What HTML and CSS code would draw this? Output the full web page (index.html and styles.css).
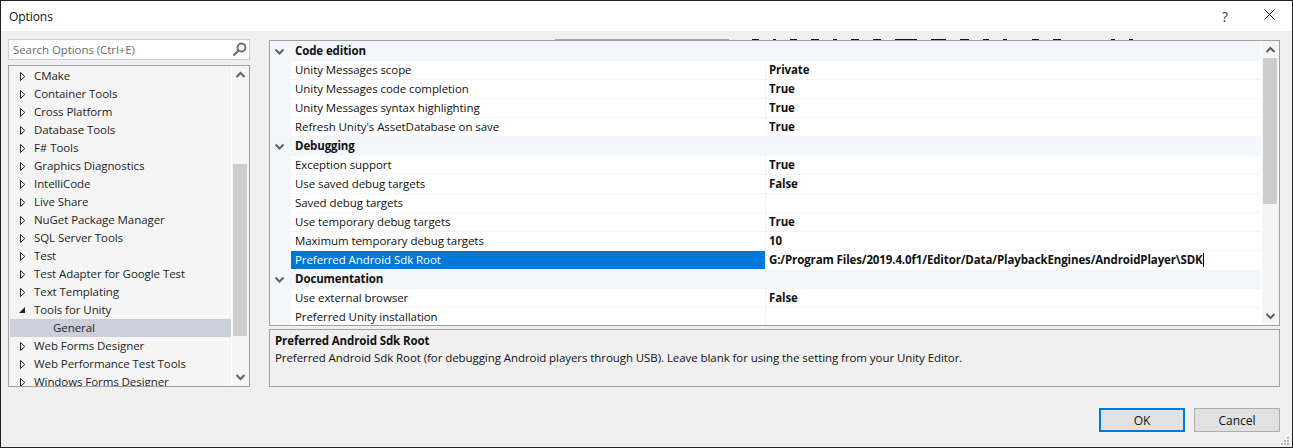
FILE: index.html
```html
<!DOCTYPE html>
<html lang="en">
<head>
<meta charset="utf-8">
<title>Options</title>
<link rel="stylesheet" href="styles.css">
</head>
<body>
<svg class="defs" width="0" height="0">
  <symbol id="closed" viewBox="0 0 6 9"><path d="M0.5 0.5V8.5L4.8 4.5Z" fill="#f5f5f5" stroke="#222"/></symbol>
  <symbol id="opened" viewBox="0 0 6 6"><path d="M6 0V6H0Z" fill="#222"/></symbol>
  <symbol id="up" viewBox="0 0 15 18"><path d="M3.5 11L7.5 7L11.5 11" fill="none" stroke="#606060" stroke-width="2"/></symbol>
  <symbol id="down" viewBox="0 0 15 18"><path d="M3.5 7L7.5 11L11.5 7" fill="none" stroke="#606060" stroke-width="2"/></symbol>
  <symbol id="chev" viewBox="0 0 21 19"><path d="M5.5 7.5L9.5 11.5L13.5 7.5" fill="none" stroke="#606060" stroke-width="2"/></symbol>
</svg>
<div class="window">
  <header class="titlebar">
    <span class="title">Options</span>
    <span class="help">?</span>
    <svg class="close" width="11" height="11" viewBox="0 0 11 11"><path d="M0.5 0.5L10.5 10.5M10.5 0.5L0.5 10.5" stroke="#111" fill="none"/></svg>
  </header>
  <main class="body">
    <div class="columns">
      <aside class="left">
        <div class="search">
          <span>Search Options (Ctrl+E)</span>
          <svg width="15" height="15" viewBox="0 0 15 15"><circle cx="9.5" cy="5.5" r="4" fill="none" stroke="#717171" stroke-width="2"/><path d="M6.5 8.5L1.5 13.5" stroke="#717171" stroke-width="2.4"/></svg>
        </div>
        <div class="tree">
          <div class="tree-list">
            <div class="node"><svg class="tri"><use href="#closed"/></svg>CMake</div>
            <div class="node"><svg class="tri"><use href="#closed"/></svg>Container Tools</div>
            <div class="node"><svg class="tri"><use href="#closed"/></svg>Cross Platform</div>
            <div class="node"><svg class="tri"><use href="#closed"/></svg>Database Tools</div>
            <div class="node"><svg class="tri"><use href="#closed"/></svg>F# Tools</div>
            <div class="node"><svg class="tri"><use href="#closed"/></svg>Graphics Diagnostics</div>
            <div class="node"><svg class="tri"><use href="#closed"/></svg>IntelliCode</div>
            <div class="node"><svg class="tri"><use href="#closed"/></svg>Live Share</div>
            <div class="node"><svg class="tri"><use href="#closed"/></svg>NuGet Package Manager</div>
            <div class="node"><svg class="tri"><use href="#closed"/></svg>SQL Server Tools</div>
            <div class="node"><svg class="tri"><use href="#closed"/></svg>Test</div>
            <div class="node"><svg class="tri"><use href="#closed"/></svg>Test Adapter for Google Test</div>
            <div class="node"><svg class="tri"><use href="#closed"/></svg>Text Templating</div>
            <div class="node"><svg class="tri-open"><use href="#opened"/></svg>Tools for Unity</div>
            <div class="node child">General</div>
            <div class="node"><svg class="tri"><use href="#closed"/></svg>Web Forms Designer</div>
            <div class="node"><svg class="tri"><use href="#closed"/></svg>Web Performance Test Tools</div>
            <div class="node"><svg class="tri"><use href="#closed"/></svg>Windows Forms Designer</div>
          </div>
          <div class="sbar tree-sbar">
            <svg class="arrow"><use href="#up"/></svg>
            <div class="thumb"></div>
            <svg class="arrow"><use href="#down"/></svg>
          </div>
        </div>
      </aside>
      <section class="right">
        <div class="grid">
          <div class="grid-list">
            <div class="group first"><svg class="chev"><use href="#chev"/></svg>Code edition</div>
            <div class="prop"><span class="name">Unity Messages scope</span><span class="val">Private</span></div>
            <div class="prop"><span class="name">Unity Messages code completion</span><span class="val">True</span></div>
            <div class="prop"><span class="name">Unity Messages syntax highlighting</span><span class="val">True</span></div>
            <div class="prop"><span class="name">Refresh Unity's AssetDatabase on save</span><span class="val">True</span></div>
            <div class="group"><svg class="chev"><use href="#chev"/></svg>Debugging</div>
            <div class="prop"><span class="name">Exception support</span><span class="val">True</span></div>
            <div class="prop"><span class="name">Use saved debug targets</span><span class="val">False</span></div>
            <div class="prop"><span class="name">Saved debug targets</span><span class="val"></span></div>
            <div class="prop"><span class="name">Use temporary debug targets</span><span class="val">True</span></div>
            <div class="prop"><span class="name">Maximum temporary debug targets</span><span class="val">10</span></div>
            <div class="prop selected"><span class="name">Preferred Android Sdk Root</span><span class="val"><span class="editing">G:/Program Files/2019.4.0f1/Editor/Data/PlaybackEngines/AndroidPlayer\SDK</span></span></div>
            <div class="group"><svg class="chev"><use href="#chev"/></svg>Documentation</div>
            <div class="prop"><span class="name">Use external browser</span><span class="val">False</span></div>
            <div class="prop"><span class="name">Preferred Unity installation</span><span class="val"></span></div>
          </div>
          <div class="sbar grid-sbar">
            <svg class="arrow"><use href="#up"/></svg>
            <div class="thumb"></div>
            <svg class="arrow"><use href="#down"/></svg>
          </div>
        </div>
        <div class="desc">
          <div class="desc-title">Preferred Android Sdk Root</div>
          <div>Preferred Android Sdk Root (for debugging Android players through USB). Leave blank for using the setting from your Unity Editor.</div>
        </div>
      </section>
    </div>
    <footer class="buttons">
      <button class="btn primary">OK</button>
      <button class="btn">Cancel</button>
    </footer>
  </main>
  <svg class="bleed" width="1293" height="1" viewBox="0 0 1293 1"><path d="M752 .5h7M773 .5h3M790 .5h7M811 .5h8M833 .5h4M851 .5h8M873 .5h8M895 .5h22M931 .5h15M960 .5h9M983 .5h6M1003 .5h4M1032 .5h7M1053 .5h8M1111 .5h4M1129 .5h4" stroke="#111" fill="none"/><path d="M555 .5h174" stroke="#a8a8a8" fill="none"/></svg>
  <svg class="grip" width="8" height="8" viewBox="0 0 8 8"><path d="M6 0h2v2H6zM3 3h2v2H3zM6 3h2v2H6zM0 6h2v2H0zM3 6h2v2H3zM6 6h2v2H6z" fill="#b8b8b8"/></svg>
</div>
</body>
</html>
```
FILE: styles.css
```css
* { box-sizing: border-box; }
html, body { margin: 0; height: 100%; overflow: hidden; }
body { font-family: "Open Sans", "Liberation Sans", sans-serif; font-size: 11.5px; letter-spacing: -0.07px; color: #1e1e1e; }
.defs { position: absolute; }
.window { position: relative; width: 1293px; height: 448px; display: flex; flex-direction: column; border: 1px solid #222; background: #f0f0f0; }
.titlebar { height: 30px; flex: none; background: #fff; display: flex; align-items: center; padding-left: 8px; }
.title { flex: 1; color: #111; font-size: 12px; }
.help { width: 14px; font-size: 14px; margin-right: 28px; color: #333; }
.close { margin-right: 17px; margin-top: -4px; }
.body { flex: 1; display: flex; flex-direction: column; padding: 8px 12px 0 7px; }
.columns { display: flex; gap: 19px; height: 348px; }
.left { width: 242px; flex: none; display: flex; flex-direction: column; gap: 5px; }
.search { height: 21px; flex: none; border: 1px solid #ccceDB; background: #fff; display: flex; align-items: center; justify-content: space-between; padding: 0 2px 0 4px; color: #6d6d6d; }
.tree { height: 322px; border: 1px solid #a0a0a0; background: #f5f5f5; display: flex; overflow: hidden; padding-left: 1px; }
.tree-list { flex: 1; padding-top: 1px; overflow: hidden; }
.node { height: 18px; line-height: 18px; display: flex; align-items: center; white-space: nowrap; padding-left: 24px; position: relative; }
.child { padding-left: 43px; background: #ccceDB; }
.tri { position: absolute; left: 10px; top: 5px; width: 6px; height: 9px; }
.tri-open { position: absolute; left: 9px; top: 6px; width: 6px; height: 6px; }
.sbar { width: 18px; flex: none; display: flex; flex-direction: column; justify-content: space-between; padding: 0 2px 0 1px; background: #f5f5f5; border-left: 1px solid #fff; }
.arrow { flex: none; width: 15px; height: 18px; }
.thumb { background: #cdcdcd; }
.tree-sbar .thumb { height: 172px; margin-top: 80px; margin-bottom: 32px; flex: none; }
.right { flex: 1; display: flex; flex-direction: column; gap: 3px; }
.grid { height: 286px; margin-top: 1px; border: 1px solid #a0a0a0; background: #f5f5f5; display: flex; overflow: hidden; }
.grid-list { flex: 1; overflow: hidden; background: #f3f6fb; }
.group { height: 19px; font-weight: 700; letter-spacing: -0.12px; color: #111; display: flex; align-items: center; padding-bottom: 2px; background: #f3f6fb; }
.group.first { height: 20px; }
.chev { flex: none; width: 21px; height: 19px; margin-right: 4px; margin-bottom: -2px; }
.prop { height: 19px; margin-left: 21px; display: flex; background: #fff; border-bottom: 1px solid #f2f4f8; line-height: 17px; white-space: nowrap; color: #111; }
.name { width: 475px; padding-left: 4px; flex: none; border-right: 1px solid #f2f4f8; overflow: hidden; }
.val { flex: 1; font-weight: 700; letter-spacing: -0.12px; padding-left: 3px; overflow: hidden; }
.selected { border-bottom-color: #fff; }
.selected .name { background: #0078d7; color: #fff; }
.editing { border-right: 1px solid #000; display: inline-block; height: 14px; line-height: 13px; margin-top: 2px; vertical-align: top; }
.grid-sbar .thumb { height: 146px; flex: none; margin-top: -1px; margin-bottom: auto; }
.desc { height: 58px; border: 1px solid #a0a0a0; padding: 2px 5px; line-height: 17px; color: #111; }
.desc-title { font-weight: 700; letter-spacing: -0.12px; }
.buttons { display: flex; justify-content: flex-end; gap: 9px; margin-top: 21px; }
.btn { width: 86px; height: 24px; font: inherit; font-size: 12px; letter-spacing: 0; color: #111; background: #e1e1e1; border: 1px solid #adadad; padding: 0; }
.primary { border: 2px solid #0078d7; }
.bleed { position: absolute; left: -1px; top: 38px; }
.grip { position: absolute; right: 3px; bottom: 2px; }
```
